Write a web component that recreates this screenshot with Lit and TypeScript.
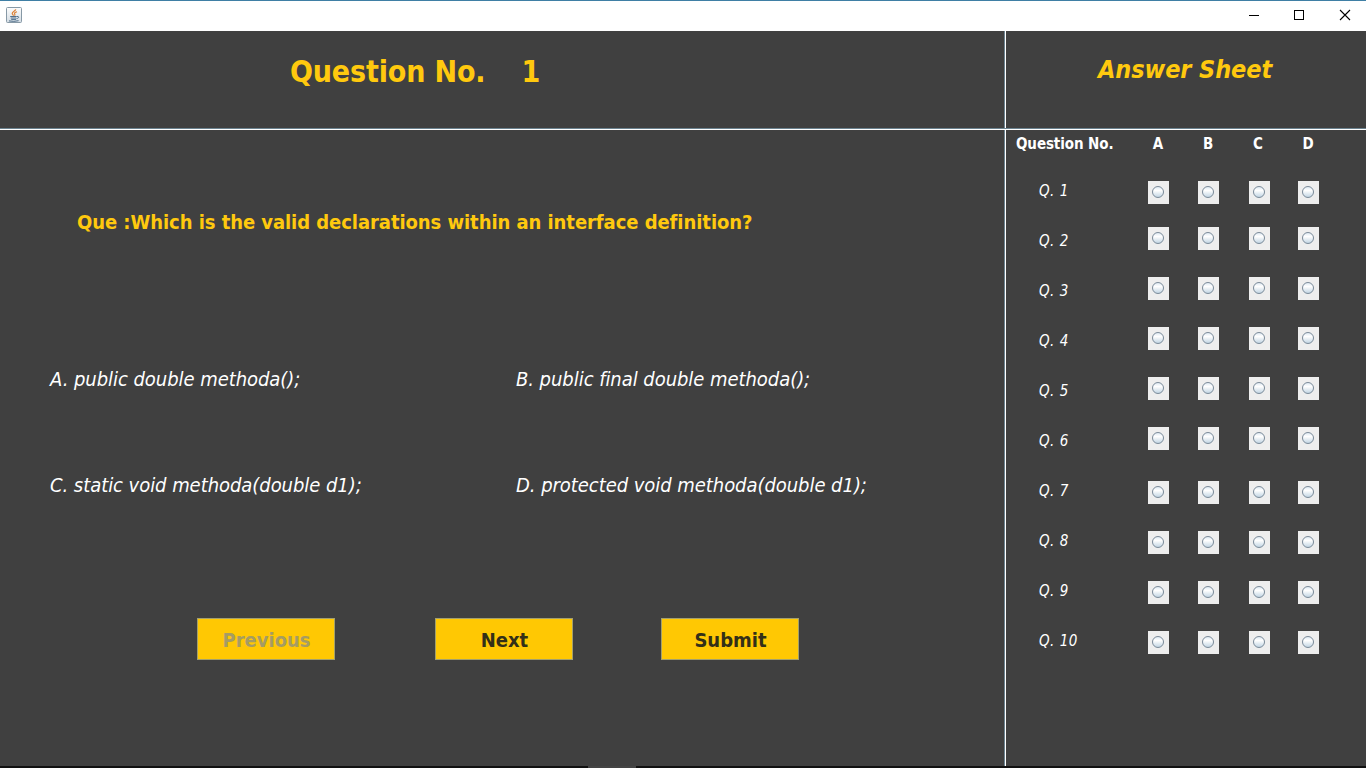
import { LitElement, html, css } from "lit";
import { customElement } from "lit/decorators.js";

const LETTERS = ["A", "B", "C", "D"];
const OPTIONS = [
  "A. public double methoda();",
  "B. public final double methoda();",
  "C. static void methoda(double d1);",
  "D. protected void methoda(double d1);",
];

@customElement("title-bar")
class TitleBar extends LitElement {
  static styles = css`
    :host {
      display: flex;
      justify-content: space-between;
      box-sizing: border-box;
      height: 31px;
      background: #fff;
      border-top: 1px solid #3f7fa5;
    }
    svg { display: block; }
    .logo { margin: 6px 0 0 6px; }
    .controls { display: flex; }
  `;
  render() {
    return html`
      <svg class="logo" width="16" height="17" viewBox="0 0 16 17">
        <defs>
          <linearGradient id="tile" x1="0" y1="0" x2="0" y2="1">
            <stop offset="0" stop-color="#fdfdfd" />
            <stop offset="1" stop-color="#d3dce3" />
          </linearGradient>
        </defs>
        <rect x=".5" y=".5" width="15" height="15" rx="1" fill="url(#tile)" stroke="#8799a6" />
        <path d="M9.800 2.400C9.600 4 6 4.800 6.200 6.500c.1.900 1.200 1.300 1.300 2.200M11 4.700C8.800 5.400 8.200 6 8.700 7c.4.700.3 1.200-.2 1.700" fill="none" stroke="#dc8136" stroke-width="1.200" />
        <path d="M4.200 9.500h6.500M4.700 11h5.500M5.200 12.400h4.800M3 13.900q4.800 1 9.600-.2M10.800 9.500c2.600-.6 2.600 1.600-.3 2.200" fill="none" stroke="#506f8b" stroke-width="1" />
      </svg>
      <div class="controls">
        <svg width="135" height="30" viewBox="0 0 135 30" fill="none" stroke="#000" shape-rendering="crispEdges">
          <path d="M18 14.500h10" />
          <rect x="63.500" y="9.500" width="9" height="9" />
          <path d="M109 9l10 10M119 9l-10 10" shape-rendering="auto" stroke-width="1.100" />
        </svg>
      </div>
    `;
  }
}

@customElement("question-panel")
class QuestionPanel extends LitElement {
  static styles = css`
    :host { display: grid; grid-template-rows: 99px 1fr; }
    .header {
      display: flex;
      box-sizing: border-box;
      border-bottom: 1px solid #fff;
      box-shadow: inset 0 -1px #6c8390;
      padding: 23px 0 0 290px;
      gap: 36px;
      font-weight: bold;
      font-size: 30px;
      line-height: 36px;
      letter-spacing: -0.15px;
      color: #ffc90e;
    }
    .body { padding-top: 77px; }
    .question {
      padding-left: 77px;
      font-weight: bold;
      font-size: 20px;
      line-height: 30px;
      letter-spacing: -0.06px;
      color: #ffc90e;
    }
    .options {
      display: grid;
      grid-template-columns: 466px 1fr;
      grid-template-rows: 106px 106px;
      padding: 127px 0 0 50px;
      font-size: 20px;
      line-height: 30px;
      letter-spacing: -0.05px;
      font-style: italic;
      color: #fff;
    }
    .actions { display: flex; padding: 42px 0 0 197px; }
    button {
      box-sizing: border-box;
      width: 138px;
      height: 42px;
      padding: 1px 0 0 1px;
      border: 1px solid #a3a06c;
      border-radius: 0;
      background: #ffc803;
      color: #333018;
      font: bold 20px "DejaVu Sans Condensed", "DejaVu Sans", sans-serif;
    }
    button:disabled { color: #a59c64; }
    .next { margin: 0 88px 0 100px; }
  `;
  render() {
    return html`
      <div class="header"><span>Question No.</span><span>1</span></div>
      <div class="body">
        <div class="question">Que :Which is the valid declarations within an interface definition?</div>
        <div class="options">${OPTIONS.map((o) => html`<div>${o}</div>`)}</div>
        <div class="actions">
          <button disabled>Previous</button>
          <button class="next">Next</button>
          <button>Submit</button>
        </div>
      </div>
    `;
  }
}

@customElement("answer-sheet")
class AnswerSheet extends LitElement {
  static styles = css`
    :host {
      display: grid;
      grid-template-rows: 99px 36px 1fr;
      color: #fff;
    }
    .title {
      box-sizing: border-box;
      border-bottom: 1px solid #fff;
      box-shadow: inset 0 -1px #6c8390;
      padding: 22px 0 0 92px;
      font: italic bold 25px/34px "DejaVu Sans Condensed", "DejaVu Sans", sans-serif;
      letter-spacing: -0.1px;
      color: #ffc90e;
    }
    .head, .row {
      display: grid;
      grid-template-columns: 132px 50px 51px 49px 50px;
      padding-left: 10px;
    }
    .head {
      font-weight: bold;
      font-size: 15px;
      line-height: 28px;
      letter-spacing: -0.1px;
    }
    .head .letter { width: 40px; margin-left: -10px; text-align: center; }
    .head .c { margin-left: -11px; }
    .row { height: 50px; }
    .label {
      padding-left: 23px;
      font-size: 15px;
      line-height: 50px;
      letter-spacing: 0.5px;
      font-style: italic;
    }
    .box {
      box-sizing: border-box;
      width: 21px;
      height: 23px;
      margin-top: 15px;
      padding: 5px 0 0 4px;
      background: #eee;
    }
    .raised .box { margin-top: 11px; }
    .radio {
      box-sizing: border-box;
      width: 12px;
      height: 12px;
      border: 1px solid #7a8a99;
      border-radius: 50%;
      background: linear-gradient(#dfeaf3, #fff 35%, #c3d6e4);
    }
  `;
  render() {
    return html`
      <div class="title">Answer Sheet</div>
      <div class="head">
        <span>Question No.</span>
        ${LETTERS.map((l) => html`<span class="letter ${l === "C" ? "c" : ""}">${l}</span>`)}
      </div>
      <div>
        ${Array.from({ length: 10 }, (_, i) => html`
          <div class="row ${i > 0 && i < 6 ? "raised" : ""}">
            <span class="label">Q. ${i + 1}</span>
            ${LETTERS.map(() => html`<div class="box"><div class="radio"></div></div>`)}
          </div>
        `)}
      </div>
    `;
  }
}

@customElement("app-root")
class AppRoot extends LitElement {
  static styles = css`
    :host {
      display: grid;
      grid-template-rows: 31px 735px 2px;
      width: 1366px;
      height: 768px;
      overflow: hidden;
      background: #404040;
      font-family: "DejaVu Sans Condensed", "DejaVu Sans", sans-serif;
      white-space: nowrap;
    }
    .main { display: grid; grid-template-columns: 1004px 2px 360px; }
    .divider {
      background:
        linear-gradient(transparent 97px, #6c8390 97px 98px, #fff 98px 99px, transparent 99px),
        linear-gradient(90deg, #6c8390 1px, #fff 1px);
    }
    .edge { display: flex; justify-content: center; background: #111; padding-right: 142px; }
    .tab { width: 48px; background: #444; }
  `;
  render() {
    return html`
      <title-bar></title-bar>
      <div class="main">
        <question-panel></question-panel>
        <div class="divider"></div>
        <answer-sheet></answer-sheet>
      </div>
      <div class="edge"><div class="tab"></div></div>
    `;
  }
}
